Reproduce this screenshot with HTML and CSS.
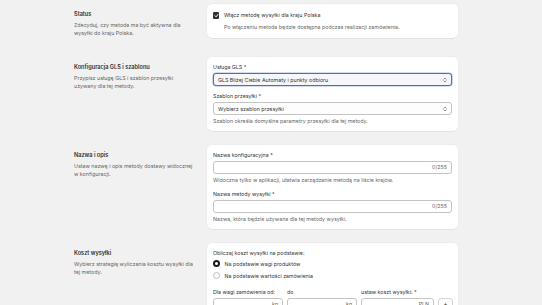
FILE: index.html
```html
<!DOCTYPE html>
<html lang="pl">
<head>
  <meta charset="UTF-8" />
  <meta name="viewport" content="width=device-width, initial-scale=1" />
  <title>Metoda wysyłki – Polska</title>
  <link rel="stylesheet" href="styles.css">
</head>
<body>
  <div class="page">

    <!-- Status -->
    <div class="section section-status">
      <div class="section-info">
        <h2>Status</h2>
        <p>Zdecyduj, czy metoda ma być aktywna dla wysyłki do kraju Polska.</p>
      </div>
      <div class="card card-status">
        <label class="checkbox">
          <span class="checkbox-box">
            <svg width="5" height="5" viewBox="0 0 10 10" fill="none" stroke="#fff" stroke-width="2" stroke-linecap="round" stroke-linejoin="round"><path d="M2 5.5l2.2 2.2L8 2.8"></path></svg>
          </span>
          Włącz metodę wysyłki dla kraju Polska
        </label>
        <p class="help indent">Po włączeniu metoda będzie dostępna podczas realizacji zamówienia.</p>
      </div>
    </div>

    <!-- GLS -->
    <div class="section">
      <div class="section-info">
        <h2>Konfiguracja GLS i szablonu</h2>
        <p>Przypisz usługę GLS i szablon przesyłki używany dla tej metody.</p>
      </div>
      <div class="card">
        <div class="field">
          <label>Usługa GLS *</label>
          <div class="select focused">
            <span>GLS Bliżej Ciebie Automaty i punkty odbioru</span>
            <svg width="4" height="6" viewBox="0 0 8 12" fill="none" stroke="#616161" stroke-width="1.4" stroke-linecap="round" stroke-linejoin="round"><path d="M1.5 4.5L4 2l2.5 2.5M1.5 7.5L4 10l2.5-2.5"></path></svg>
          </div>
        </div>
        <div class="field">
          <label>Szablon przesyłki *</label>
          <div class="select">
            <span>Wybierz szablon przesyłki</span>
            <svg width="4" height="6" viewBox="0 0 8 12" fill="none" stroke="#616161" stroke-width="1.4" stroke-linecap="round" stroke-linejoin="round"><path d="M1.5 4.5L4 2l2.5 2.5M1.5 7.5L4 10l2.5-2.5"></path></svg>
          </div>
          <p class="help">Szablon określa domyślne parametry przesyłki dla tej metody.</p>
        </div>
      </div>
    </div>

    <!-- Nazwa -->
    <div class="section">
      <div class="section-info">
        <h2>Nazwa i opis</h2>
        <p>Ustaw nazwę i opis metody dostawy widocznej w konfiguracji.</p>
      </div>
      <div class="card">
        <div class="field">
          <label>Nazwa konfiguracyjna *</label>
          <div class="input"><span class="suffix">0/255</span></div>
          <p class="help">Widoczna tylko w aplikacji, ułatwia zarządzanie metodą na liście krajów.</p>
        </div>
        <div class="field">
          <label>Nazwa metody wysyłki *</label>
          <div class="input"><span class="suffix">0/255</span></div>
          <p class="help">Nazwa, która będzie używana dla tej metody wysyłki.</p>
        </div>
      </div>
    </div>

    <!-- Koszt -->
    <div class="section">
      <div class="section-info">
        <h2>Koszt wysyłki</h2>
        <p>Wybierz strategię wyliczania kosztu wysyłki dla tej metody.</p>
      </div>
      <div class="card">
        <div class="field">
          <label>Obliczaj koszt wysyłki na podstawie:</label>
          <div class="radio-list">
            <label class="radio"><span class="radio-dot checked"></span>Na podstawie wagi produktów</label>
            <label class="radio"><span class="radio-dot"></span>Na podstawie wartości zamówienia</label>
          </div>
        </div>
        <div class="rate-row">
          <div class="rate-col">
            <label>Dla wagi zamówienia od:</label>
            <div class="input"><span class="suffix">kg</span></div>
          </div>
          <div class="rate-col">
            <label>do</label>
            <div class="input"><span class="suffix">kg</span></div>
          </div>
          <div class="rate-col">
            <label>ustaw koszt wysyłki: *</label>
            <div class="input"><span class="suffix">PLN</span></div>
          </div>
          <div class="rate-col">
            <label>&nbsp;</label>
            <button class="add-button">+</button>
          </div>
        </div>
      </div>
    </div>

  </div>
</body>
</html>
```

FILE: styles.css
```css
html, body {
  overflow: hidden;
}
body {
  margin: 0;
  background: #f1f1f1;
  font-family: 'Inter', 'Noto Sans', sans-serif;
  font-size: 5.3px;
  line-height: 8px;
  color: #353535;
}
.page {
  padding: 4px 0 0 74px;
  display: flex;
  flex-direction: column;
  gap: 14px;
}
.section {
  display: grid;
  grid-template-columns: 120px 251px;
  column-gap: 13px;
  align-items: start;
}
.section-status {
  margin-bottom: 5px;
}
.section-info {
  padding-top: 6px;
}
.section-info h2 {
  margin: 0;
  font-size: 5.6px;
  font-weight: 600;
  line-height: 8px;
  color: #303030;
}
.section-info p {
  margin: 3px 0 0;
  color: #666;
}
.card {
  background: #fff;
  border-radius: 5px;
  padding: 6px;
  box-shadow: 0 0.5px 0 rgba(0, 0, 0, 0.08), 0 0 0 0.4px rgba(0, 0, 0, 0.04);
  display: flex;
  flex-direction: column;
  gap: 6px;
}
.card-status {
  padding: 7.4px 6px;
  gap: 1.6px;
}
.field {
  display: flex;
  flex-direction: column;
}
.field > label,
.rate-col > label {
  margin-bottom: 2px;
}
.help {
  margin: 2px 0 0;
  color: #666;
}
.indent {
  padding-left: 11px;
}
.checkbox {
  display: flex;
  align-items: center;
  gap: 4.5px;
}
.checkbox-box {
  width: 6.4px;
  height: 6.4px;
  border-radius: 1.2px;
  background: #303030;
  display: flex;
  align-items: center;
  justify-content: center;
}
.select,
.input {
  height: 12.8px;
  box-sizing: border-box;
  border: 0.8px solid #c4c4c4;
  border-radius: 3px;
  background: #fff;
  display: flex;
  align-items: center;
  padding: 0 4px;
}
.select {
  justify-content: space-between;
  background: #fdfdfd;
}
.select.focused {
  border: 1.2px solid #4d6fb5;
  box-shadow: 0 0 0 0.6px #a9bbe0;
  background: #f7f7f9;
}
.input {
  justify-content: flex-end;
}
.suffix {
  color: #666;
}
.radio-list {
  display: flex;
  flex-direction: column;
  gap: 4px;
  margin-top: 1px;
}
.radio {
  display: flex;
  align-items: center;
  gap: 4.5px;
}
.radio-dot {
  width: 7px;
  height: 7px;
  box-sizing: border-box;
  border-radius: 50%;
  border: 0.8px solid #bdbdbd;
  background: #fff;
}
.radio-dot.checked {
  border: 2.2px solid #1a1a1a;
}
.rate-row {
  display: grid;
  grid-template-columns: 70px 70px 73px 15px;
  column-gap: 4px;
  margin-top: 2px;
}
.rate-col {
  display: flex;
  flex-direction: column;
}
.add-button {
  height: 12.8px;
  padding: 0;
  border: 0.8px solid #d4d4d4;
  border-radius: 3px;
  background: #fff;
  font-family: inherit;
  font-size: 6px;
  color: #303030;
}
```
